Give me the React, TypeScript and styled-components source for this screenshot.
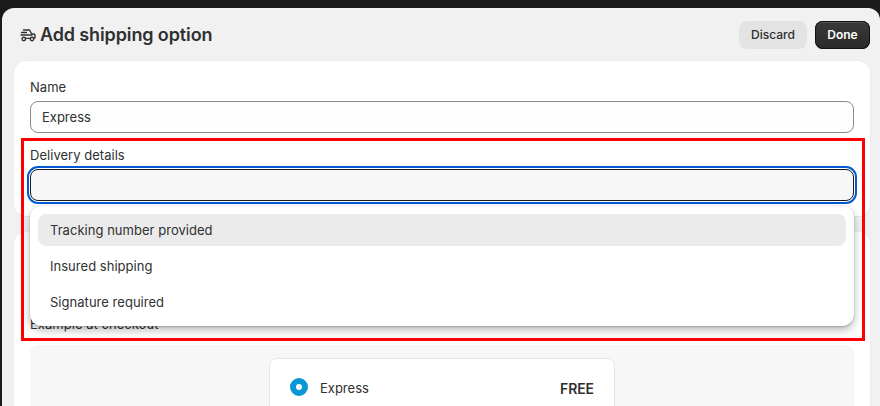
import React from 'react';
import styled, { createGlobalStyle } from 'styled-components';

const GlobalStyle = createGlobalStyle`
  html, body {
    margin: 0;
    padding: 0;
    height: 406px;
    overflow: hidden;
    background: #1a1a1a;
  }
  * {
    box-sizing: border-box;
  }
`;

const Page = styled.div`
  height: 406px;
  padding: 8px 0 0 2px;
  overflow: hidden;
  background: #1a1a1a;
  font-family: Inter, 'Noto Sans', sans-serif;
  font-size: 13px;
  color: #303030;
`;

const Modal = styled.div`
  position: relative;
  height: 398px;
  overflow: hidden;
  background: #f1f1f1;
  border-radius: 12px 12px 0 0;
`;

const Header = styled.header`
  display: flex;
  align-items: center;
  justify-content: space-between;
  height: 53px;
  padding: 0 10px 0 16px;
`;

const Title = styled.h1`
  display: flex;
  align-items: center;
  gap: 2px;
  margin: 0;
  font-size: 18px;
  font-weight: 600;
  line-height: 24px;
  letter-spacing: -0.12px;
`;

const Actions = styled.div`
  display: flex;
  gap: 8px;
`;

const Button = styled.button<{ $primary?: boolean }>`
  width: ${(p) => (p.$primary ? '55px' : '68px')};
  height: 28px;
  padding: 0;
  border: 0;
  border-radius: 8px;
  font-family: inherit;
  font-size: 12px;
  font-weight: ${(p) => (p.$primary ? 600 : 550)};
  background: ${(p) => (p.$primary ? 'linear-gradient(#3a3a3a, #2a2a2a)' : '#e3e3e3')};
  color: ${(p) => (p.$primary ? '#fff' : '#303030')};
  box-shadow: ${(p) => (p.$primary ? 'inset 0 0 0 1px #111, inset 0 2px 0 #555' : 'none')};
`;

const Stack = styled.div`
  display: flex;
  flex-direction: column;
  gap: 16px;
  padding: 0 10px 0 12px;
`;

const Card = styled.section`
  display: flex;
  flex-direction: column;
  flex-shrink: 0;
  padding: 16px;
  background: #fff;
  border-radius: 12px;
  box-shadow: 0 1px 0 #e3e3e3, 0 0 0 1px #ececec;
`;

const DetailsCard = styled(Card)`
  height: 155px;
`;

const PreviewCard = styled(Card)`
  padding-top: 82px;
  height: 400px;
`;

const Label = styled.label`
  display: block;
  flex-shrink: 0;
  margin-bottom: 4px;
  line-height: 20px;
  letter-spacing: 0.03px;
  color: #303030;
`;

const Input = styled.div<{ $focused?: boolean }>`
  display: flex;
  flex-shrink: 0;
  align-items: center;
  height: 32px;
  margin-bottom: 12px;
  padding: 0 11px;
  border: 1px solid ${(p) => (p.$focused ? '#1a1a1a' : '#8a8a8a')};
  border-radius: 8px;
  background: ${(p) => (p.$focused ? '#f7f7f7' : '#fdfdfd')};
  outline: ${(p) => (p.$focused ? '2px solid #005bd3' : 'none')};
  outline-offset: 1px;
`;

const Preview = styled.div`
  display: flex;
  flex-shrink: 0;
  justify-content: center;
  margin-top: 7px;
  padding-top: 13px;
  height: 200px;
  border-radius: 8px;
  background: #f7f7f7;
`;

const RateCard = styled.div`
  display: flex;
  align-items: flex-start;
  justify-content: space-between;
  width: 346px;
  height: 160px;
  padding: 19px 20px 0 20px;
  border: 1px solid #e6e6e6;
  border-radius: 8px;
  background: #fff;
`;

const RateName = styled.div`
  display: flex;
  align-items: center;
  gap: 12px;
  line-height: 18px;
`;

const Radio = styled.span`
  width: 18px;
  height: 18px;
  margin-bottom: 2px;
  border-radius: 50%;
  border: 6px solid #0a97d5;
  background: #fff;
`;

const Price = styled.strong`
  margin-top: 2px;
  font-size: 14px;
  font-weight: 600;
  line-height: 18px;
  letter-spacing: -0.1px;
`;

const Menu = styled.ul`
  position: absolute;
  top: 198px;
  left: 28px;
  width: 824px;
  height: 120px;
  margin: 0;
  padding: 8px;
  display: flex;
  flex-direction: column;
  gap: 4px;
  list-style: none;
  background: #fff;
  border-radius: 12px;
  box-shadow: 0 4px 10px rgba(0, 0, 0, 0.28), 0 1px 2px rgba(0, 0, 0, 0.2);
`;

const MenuItem = styled.li<{ $active?: boolean }>`
  display: flex;
  align-items: center;
  flex-shrink: 0;
  height: 32px;
  padding: 0 12px;
  border-radius: 8px;
  letter-spacing: 0.03px;
  background: ${(p) => (p.$active ? '#ebebeb' : 'transparent')};
`;

const Highlight = styled.div`
  position: absolute;
  top: 130px;
  left: 19px;
  width: 844px;
  height: 203px;
  border: 3px solid #ff0000;
  pointer-events: none;
`;

const DeliveryIcon = () => (
  <svg width="20" height="20" viewBox="0 0 20 20" fill="none" stroke="#303030" strokeWidth="1.4" strokeLinecap="round" strokeLinejoin="round">
    <path d="M5.5 5h6l2.2 4h2c.8 0 1.3.5 1.3 1.2v2.3c0 .4-.3.7-.7.7" />
    <path d="M3.5 7.5h5M3 10h11" />
    <path d="M8 13.4h4" />
    <circle cx="5.8" cy="14" r="1.7" />
    <circle cx="14" cy="14" r="1.7" />
  </svg>
);

const options = [
  { label: 'Tracking number provided', active: true },
  { label: 'Insured shipping', active: false },
  { label: 'Signature required', active: false },
];

export default function App() {
  return (
    <Page>
      <GlobalStyle />
      <Modal>
        <Header>
          <Title>
            <DeliveryIcon />
            Add shipping option
          </Title>
          <Actions>
            <Button>Discard</Button>
            <Button $primary>Done</Button>
          </Actions>
        </Header>
        <Stack>
          <DetailsCard>
            <Label>Name</Label>
            <Input>Express</Input>
            <Label>Delivery details</Label>
            <Input $focused />
          </DetailsCard>
          <PreviewCard>
            <Label>Example at checkout</Label>
            <Preview>
              <RateCard>
                <RateName>
                  <Radio />
                  Express
                </RateName>
                <Price>FREE</Price>
              </RateCard>
            </Preview>
          </PreviewCard>
        </Stack>
        <Menu>
          {options.map((option) => (
            <MenuItem key={option.label} $active={option.active}>
              {option.label}
            </MenuItem>
          ))}
        </Menu>
        <Highlight />
      </Modal>
    </Page>
  );
}
